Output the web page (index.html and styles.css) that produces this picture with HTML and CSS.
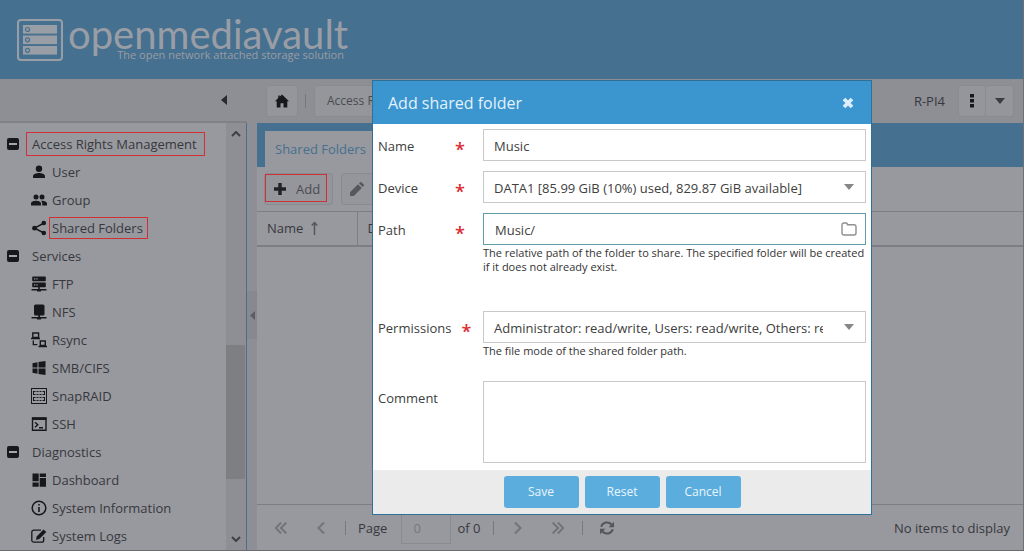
FILE: index.html
```html
<!DOCTYPE html>
<html lang="en">
<head>
<meta charset="utf-8">
<title>openmediavault - Shared Folders</title>
<link rel="stylesheet" href="styles.css">
</head>
<body>
<div class="app">
  <header class="banner">
    <svg class="logo-mark" viewBox="0 0 46 42" width="46" height="42">
      <rect x="1" y="1" width="44" height="40" rx="3" fill="none" stroke="currentColor" stroke-width="2"/>
      <g fill="currentColor"><rect x="6" y="6" width="34" height="8.600"/><rect x="6" y="16.500" width="34" height="8.600"/><rect x="6" y="27" width="34" height="8.600"/></g>
      <g fill="none" stroke="#46708f" stroke-width="1.200"><circle cx="10.500" cy="10.500" r="2"/><circle cx="10.500" cy="20.800" r="2"/><circle cx="10.500" cy="31.300" r="2"/></g>
    </svg>
    <div class="brand">
      <span class="brand-name">openmediavault</span>
      <span class="brand-tag">The open network attached storage solution</span>
    </div>
  </header>

  <div class="workspace">
    <nav class="sidebar">
      <div class="sidebar-head">
        <button class="bare" aria-label="Collapse navigation"><svg width="6" height="10" viewBox="0 0 6 10"><path d="M6 0v10L0 5z" fill="#292a2f"/></svg></button>
      </div>
      <div class="sidebar-body">
        <ul class="tree">
          <li class="group"><i class="minus"></i><a href="#" class="marked marked-group">Access Rights Management</a></li>
          <li><svg viewBox="0 0 16 16"><circle cx="8" cy="4.800" r="3.200"/><path d="M2 14v-1.800C2 10 5.500 9 8 9s6 1 6 3.200V14z"/></svg><a href="#">User</a></li>
          <li><svg viewBox="0 0 16 16"><circle cx="5" cy="5" r="2.500"/><circle cx="11" cy="5" r="2.500"/><path d="M0 13.500v-2C0 9.500 3 8.700 5 8.700s5 .8 5 2.800v2zM11.200 13.500v-2c0-1.200-.5-2.100-1.300-2.800 2-.2 6.100.6 6.100 2.800v2z"/></svg><a href="#">Group</a></li>
          <li><svg viewBox="0 0 16 16"><path d="M13 3 3.500 8.200 13 13" fill="none" stroke="currentColor" stroke-width="1.500"/><circle cx="12.800" cy="3" r="2.300"/><circle cx="3.500" cy="8.200" r="2.400"/><circle cx="12.800" cy="13" r="2.300"/></svg><a href="#" class="marked">Shared Folders</a></li>
          <li class="group"><i class="minus"></i><a href="#">Services</a></li>
          <li><svg viewBox="0 0 16 16"><path d="M2 .5h12a.8.8 0 0 1 .8.8v3.200a.8.8 0 0 1-.8.800H2a.8.8 0 0 1-.8-.8V1.300A.8.8 0 0 1 2 .500zM2 6.500h12a.8.8 0 0 1 .8.8v3.200a.8.8 0 0 1-.8.800H2a.8.8 0 0 1-.8-.8V7.300a.8.8 0 0 1 .8-.8zM7.200 11h1.600v2H15.500v1.500H10V15.500H6v-1H.5V13h6.700z"/><path d="M3 2.300h1.300v1.300H3zM5.300 2.300h1.300v1.300H5.300zM3 8.300h1.300v1.300H3zM5.300 8.300h1.300v1.300H5.300z" fill="#98999e"/></svg><a href="#">FTP</a></li>
          <li><svg viewBox="0 0 16 16"><rect x="3" y=".5" width="10.500" height="11" rx="1.500"/><path d="M7.300 11h1.700v2h6.500v1.500H10v1H6v-1H.5V13h6.800z"/></svg><a href="#">NFS</a></li>
          <li><svg viewBox="0 0 16 16"><path d="M1.800 1h5.800v4.500H1.800zM9.300 9h5v4.500h-5z" fill="none" stroke="currentColor" stroke-width="1.400"/><path d="M0 5.800h9v1.400H0zM7.500 13.800H16v1.500H7.500z"/><path d="M2.300 8.500v4.200h4" fill="none" stroke="currentColor" stroke-width="1.300"/></svg><a href="#">Rsync</a></li>
          <li><svg viewBox="0 0 16 16"><path d="M1.500 3.200 6.500 2.300v5.200h-5zM7.500 2.100 14.500 1v6.500h-7zM1.500 8.500h5v5.200l-5-.9zM7.500 8.500h7V15l-7-1.100z"/></svg><a href="#">SMB/CIFS</a></li>
          <li><svg viewBox="0 0 16 16"><rect x=".5" y=".5" width="15" height="15" fill="none" stroke="currentColor"/><path d="M2.500 3.500h11M2.500 6.500h11M2.500 9.500h11M2.500 12.500h11" fill="none" stroke="currentColor" stroke-dasharray="2 1"/><path d="M2.500 3v4M13.500 3v4M2.500 9v4M13.500 9v4" stroke="currentColor"/></svg><a href="#">SnapRAID</a></li>
          <li><svg viewBox="0 0 16 16"><path d="M1.500 2h13.500v12.300H1.500z" fill="none" stroke="currentColor" stroke-width="1.400"/><path d="M1 1.500h14.500V4H1z"/><path d="M4 6.300 6.800 8.700 4 11.200M8 11.800h4" fill="none" stroke="currentColor" stroke-width="1.400"/></svg><a href="#">SSH</a></li>
          <li class="group"><i class="minus"></i><a href="#">Diagnostics</a></li>
          <li><svg viewBox="0 0 16 16"><path d="M1.500 1.500h6.200v7.700H1.500zM8.700 1.500h6.300V5H8.700zM8.700 6h6.300v8.700H8.700zM1.500 10.500h6.200v4.200H1.500z"/></svg><a href="#">Dashboard</a></li>
          <li><svg viewBox="0 0 16 16"><circle cx="8" cy="8" r="6.800" fill="none" stroke="currentColor" stroke-width="1.500"/><path d="M7.200 4h1.600v1.600H7.200zM7.200 7h1.600v5H7.200z"/></svg><a href="#">System Information</a></li>
          <li><svg viewBox="0 0 16 16"><path d="M12.700 9v3.200a2 2 0 0 1-2 2H2.800a2 2 0 0 1-2-2v-8a2 2 0 0 1 2-2H10" fill="none" stroke="currentColor" stroke-width="1.300"/><path d="m12.500 1.500 2.800 2.600-7 7-3.300 1 .7-3.600z"/></svg><a href="#">System Logs</a></li>
        </ul>
        <div class="scrollbar" aria-hidden="true">
          <svg width="10" height="6" viewBox="0 0 10 6"><path d="m1 5 4-4 4 4" fill="none" stroke="#3f4045" stroke-width="2"/></svg>
          <div class="scroll-track"><div class="scroll-thumb"></div></div>
          <svg width="10" height="6" viewBox="0 0 10 6"><path d="m1 1 4 4 4-4" fill="none" stroke="#3f4045" stroke-width="2"/></svg>
        </div>
      </div>
    </nav>

    <div class="splitter"><span class="grip"><svg width="5" height="9" viewBox="0 0 5 9"><path d="M5 0v9L0 4.500z" fill="#5c5d62"/></svg></span></div>

    <main class="main">
      <div class="crumbs">
        <button class="btn btn-home" aria-label="Home"><svg width="14" height="14" viewBox="0 0 14 14"><path d="M7 .5 14 7.200h-1.700V13.500H8.500V9.200h-3v4.300H1.700V7.200H0L3.200 4V1.500h1.500v1.200z" fill="#17181c"/></svg></button>
        <span class="sep"></span>
        <button class="btn btn-crumb">Access Rights Management</button>
        <span class="host">R-PI4</span>
        <div class="btn-pair">
          <button class="btn" aria-label="Menu"><svg width="4" height="14" viewBox="0 0 4 14"><path d="M0 0h4v3.500H0zM0 5h4v3.500H0zM0 10h4v3.500H0z" fill="#17181c"/></svg></button>
          <button class="btn" aria-label="More"><svg width="10" height="6" viewBox="0 0 10 6"><path d="M0 0h10L5 6z" fill="#3a3b40"/></svg></button>
        </div>
      </div>
      <div class="tabs"><a href="#" class="tab">Shared Folders</a></div>
      <div class="toolbar">
        <button class="btn btn-add"><span class="add-mark"><svg width="12" height="12" viewBox="0 0 12 12"><path d="M4.300 0h3.400v4.300H12v3.400H7.700V12H4.300V7.700H0V4.300h4.300z" fill="#202126"/></svg>Add</span></button>
        <button class="btn btn-edit" aria-label="Edit"><svg width="14" height="14" viewBox="0 0 14 14"><path d="M0 14v-3.800l8-8L11.800 6l-8 8zM9 1.300 10.200.2q.7-.4 1.300.1l2.200 2.200q.6.700 0 1.400l-1.100 1.100z" fill="#57585d"/></svg></button>
      </div>
      <table class="grid">
        <thead><tr><th class="col-name">Name <svg width="7" height="14" viewBox="0 0 7 14"><path d="M3.500 14V2M.8 4.500l2.700-3 2.700 3" fill="none" stroke="#55565b" stroke-width="1.500"/></svg></th><th>Device</th></tr></thead>
      </table>
      <div class="grid-space"></div>
      <footer class="pager">
        <button class="bare nav" aria-label="First page"><svg width="12" height="12" viewBox="0 0 12 12"><path d="M6 .5.8 6 6 11.500M11.300.5 6 6l5.300 5.500"/></svg></button>
        <button class="bare nav" aria-label="Previous page"><svg width="12" height="12" viewBox="0 0 12 12"><path d="M9 .5 3.500 6 9 11.500"/></svg></button>
        <span class="sep"></span>
        <label class="page-label" for="page">Page</label>
        <input class="page-input" id="page" value="0">
        <span>of 0</span>
        <span class="sep sep-next"></span>
        <button class="bare nav" aria-label="Next page"><svg width="12" height="12" viewBox="0 0 12 12"><path d="M3 .5 8.500 6 3 11.500"/></svg></button>
        <button class="bare nav" aria-label="Last page"><svg width="12" height="12" viewBox="0 0 12 12"><path d="M.7.5 6 6 .7 11.500M6 .5 11.200 6 6 11.500"/></svg></button>
        <span class="sep sep-refresh"></span>
        <button class="bare nav" aria-label="Refresh"><svg class="refresh" width="14" height="14" viewBox="0 0 14 14"><path d="M1.200 5.800A6 6 0 0 1 11.500 3.500M12.800 8.200A6 6 0 0 1 2.500 10.500"/><path class="heads" d="M14 .8v5.400H8.600zM0 13.200V7.800h5.400z"/></svg></button>
        <span class="status">No items to display</span>
      </footer>
    </main>
  </div>
</div>

<section class="dialog" role="dialog" aria-labelledby="dialog-title">
  <header class="dialog-head">
    <h1 id="dialog-title">Add shared folder</h1>
    <button class="bare" aria-label="Close"><svg width="12" height="12" viewBox="0 0 12 12"><path d="m2 2 8 8M10 2l-8 8" stroke="#dceefb" stroke-width="3.800"/></svg></button>
  </header>
  <form class="form">
    <div class="row">
      <div class="label"><label for="name">Name</label><b>*</b></div>
      <div class="field"><input class="control" id="name" value="Music"></div>
    </div>
    <div class="row">
      <div class="label"><label for="device">Device</label><b>*</b></div>
      <div class="field"><select class="control" id="device"><option>DATA1 [85.99 GiB (10%) used, 829.87 GiB available]</option></select><svg class="trigger arrow" width="10" height="6" viewBox="0 0 10 6"><path d="M0 0h10L5 6z" fill="#868686"/></svg></div>
    </div>
    <div class="row row-path">
      <div class="label"><label for="path">Path</label><b>*</b></div>
      <div class="field"><input class="control active" id="path" value="Music/"><svg class="trigger" width="16" height="14" viewBox="0 0 16 14"><path d="M1 11V3Q1 1 3 1h2q1.500 0 1.500 1.700H13q2 0 2 2V11q0 2-2 2H3q-2 0-2-2z" fill="none" stroke="#8f8f8f" stroke-width="1.400"/></svg>
      <p class="help">The relative path of the folder to share. The specified folder will be created if it does not already exist.</p></div>
    </div>
    <div class="row row-perm">
      <div class="label"><label for="perm">Permissions</label><b>*</b></div>
      <div class="field"><select class="control" id="perm"><option>Administrator: read/write, Users: read/write, Others: read-only</option></select><svg class="trigger arrow" width="10" height="6" viewBox="0 0 10 6"><path d="M0 0h10L5 6z" fill="#868686"/></svg>
      <p class="help">The file mode of the shared folder path.</p></div>
    </div>
    <div class="row">
      <div class="label"><label for="comment">Comment</label></div>
      <div class="field"><textarea class="control" id="comment"></textarea></div>
    </div>
  </form>
  <footer class="dialog-foot">
    <button class="action">Save</button>
    <button class="action">Reset</button>
    <button class="action">Cancel</button>
  </footer>
</section>
</body>
</html>
```
FILE: styles.css
```css
* { box-sizing: border-box; }
body { margin: 0; font: 13px/18px "Open Sans", "Noto Sans", sans-serif; color: #37383d; }
button, input, select, textarea { font: inherit; color: inherit; margin: 0; }
a { color: inherit; text-decoration: none; }
svg { display: block; flex: none; }
.bare { border: 0; padding: 0; background: none; }

.app { display: flex; flex-direction: column; height: 100vh; overflow: hidden; background: #8e8f95; border-right: 1px solid #6d7176; border-bottom: 1px solid #6b6b70; }
.banner { display: flex; flex: none; height: 79px; padding: 19px 17px; gap: 5px; background: #46708f; color: #999da5; }
.brand { display: flex; flex-direction: column; width: 280px; }
.brand-name { font: 400 40px/30px Lato, sans-serif; white-space: nowrap; }
.brand-tag { align-self: flex-end; margin-right: 4px; font-size: 11px; line-height: 12px; white-space: nowrap; }

.workspace { display: flex; flex: 1; min-height: 0; }
.sidebar { display: flex; flex-direction: column; width: 247px; }
.sidebar-head { display: flex; flex: none; align-items: center; justify-content: flex-end; height: 44px; padding-right: 20px; border-bottom: 2px solid #7f8187; }
.sidebar-body { display: flex; flex: 1; min-height: 0; background: #98999e; border-right: 1px solid #46708f; }
.tree { flex: 1; margin: 0; padding: 7px 0 0; list-style: none; overflow: hidden; }
.tree li { display: flex; align-items: center; gap: 5px; height: 28px; padding-left: 31px; }
.tree li svg { width: 16px; height: 16px; fill: currentColor; color: #17181c; }
.tree .group { gap: 13px; padding-left: 7px; }
.minus { display: flex; align-items: center; justify-content: center; width: 12px; height: 12px; border-radius: 2px; background: #17181c; }
.minus::before { content: ""; width: 8px; height: 2px; background: #a5a6ab; }
.marked { padding-right: 2px; outline: 1px solid #cf2f35; outline-offset: 2px; line-height: 16px; }
.marked-group { outline-offset: 5px; line-height: 12px; }
.scrollbar { display: flex; flex-direction: column; align-items: center; width: 20px; padding: 8px; background: #8e8f94; }
.scroll-track { display: flex; flex-direction: column; flex: 1; align-self: stretch; margin: 0 -8px; }
.scroll-track::before { content: ""; flex: 207; }
.scroll-thumb { flex: 133; background: #7e7f83; margin-right: 1px; }
.scroll-track::after { content: ""; flex: 57; }
.splitter { display: flex; justify-content: flex-end; width: 10px; padding-top: 212px; }
.grip { display: flex; align-items: center; justify-content: center; width: 10px; height: 48px; background: #88898e; }

.main { display: flex; flex: 1; flex-direction: column; min-width: 0; background: #98999e; }
.crumbs { display: flex; flex: none; align-items: center; height: 44px; padding: 0 9px; background: #8e8f95; }
.btn { display: flex; align-items: center; justify-content: center; height: 32px; padding: 0; border: 1px solid #8a8b91; border-radius: 3px; background: #95969b; color: #4a4b50; white-space: nowrap; }
.btn-home { width: 32px; }
.sep { width: 1px; height: 14px; background: #77787d; }
.crumbs .sep { margin: 0 8px 0 7px; }
.btn-crumb { padding: 0 12px; font-size: 12px; }
.host { margin-left: auto; }
.btn-pair { display: flex; margin-left: 13px; }
.btn-pair .btn { width: 28px; }
.btn-pair .btn + .btn { border-left: 0; }
.tabs { display: flex; flex: none; align-items: flex-end; height: 44px; padding: 0 8px; background: #46708f; }
.tab { height: 36px; padding: 0 10px; background: #98999e; color: #46708f; line-height: 36px; }
.toolbar { display: flex; flex: none; gap: 8px; height: 44px; padding: 6px 7px; }
.btn-add { width: 69px; align-items: flex-start; justify-content: flex-start; }
.add-mark { display: flex; align-items: center; gap: 10px; height: 28px; padding: 2px 6px 0 8px; border: 1px solid #cf2f35; }
.btn-edit { width: 69px; padding: 0 8px; justify-content: flex-start; }
.grid { width: 100%; border-collapse: collapse; flex: none; }
.grid th { height: 34px; padding: 0 10px; border-top: 1px solid #7d7e83; border-bottom: 2px solid #7d7e83; font-weight: 400; text-align: left; }
.grid .col-name { width: 100px; border-right: 1px solid #7d7e83; }
.grid th svg { display: inline-block; margin-left: 4px; vertical-align: -2px; }
.grid-space { flex: 1; }
.pager { display: flex; flex: none; align-items: center; height: 46px; padding: 0 13px 0 8px; border-top: 1px solid #7d7e83; }
.nav { display: flex; align-items: center; justify-content: center; width: 32px; height: 32px; margin-right: 8px; }
.nav svg { fill: none; stroke: #727378; stroke-width: 2; }
.nav .refresh { stroke: #55565b; }
.refresh .heads { fill: #55565b; stroke: none; }
.page-label { margin: 0 14px 0 12px; }
.page-input { width: 50px; height: 32px; padding: 0 11px; margin-right: 6px; border: 1px solid #8a8b90; background: none; color: #76777c; }
.sep-next { margin: 0 8px 0 13px; }
.sep-refresh { margin-right: 8px; }
.status { margin-left: auto; }

.dialog { position: absolute; top: 80px; left: 372px; width: 500px; border: 1px solid #2f7099; background: #fff; color: #404040; }
.dialog-head { display: flex; align-items: center; justify-content: space-between; height: 43px; padding: 0 17px 0 15px; background: #3b96d0; color: #e3f1fb; }
.dialog-head h1 { margin: 0; font-size: 16px; font-weight: 400; line-height: 22px; }
.form { display: flex; flex-direction: column; gap: 10px; padding: 5px 5px 7px; }
.row { display: flex; align-items: flex-start; }
.row-path { min-height: 88px; }
.row-perm { min-height: 60px; }
.label { display: flex; align-items: center; gap: 10px; width: 105px; height: 34px; margin-bottom: -2px; }
.label label { min-width: 67px; }
.label b { height: 18px; color: #dd2a30; font: 600 18px/25px "Open Sans", sans-serif; }
.field { position: relative; flex: 1; min-width: 0; }
.control { display: block; width: 100%; height: 32px; padding: 1px 10px 0; border: 1px solid #c9c9c9; border-radius: 0; outline: 0; background: #fff; appearance: none; }
select.control { padding-right: 42px; }
.active { border-color: #5f9dab; padding-left: 11px; }
textarea.control { height: 82px; resize: none; }
.trigger { position: absolute; top: 9px; right: 9px; }
.arrow { top: 13px; right: 12px; }
.help { margin: 1px 0 0; font-size: 11px; line-height: 14px; color: #333; }
.dialog-foot { display: flex; align-items: center; justify-content: center; gap: 6px; height: 44px; background: #ebebeb; }
.action { width: 75px; height: 32px; padding: 0; border: 0; border-radius: 3px; background: #5badde; color: #e9f5fc; font-size: 12px; }
```
